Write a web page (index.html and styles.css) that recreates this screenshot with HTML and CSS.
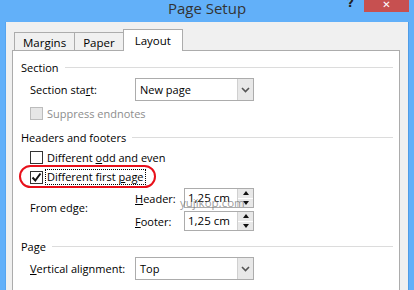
FILE: index.html
```html
<!DOCTYPE html>
<html lang="en">
<head>
  <meta charset="UTF-8">
  <title>Page Setup</title>
  <link rel="stylesheet" href="styles.css">
</head>
<body>
  <div class="window">
    <!-- Title bar -->
    <div class="titlebar">
      <div></div>
      <div class="title">Page Setup</div>
      <div class="controls">
        <span class="help">?</span>
        <span class="close">&#x2715;</span>
      </div>
    </div>

    <div class="frame">
      <!-- Tabs -->
      <div class="tabs">
        <div class="tab">Margins</div>
        <div class="tab">Paper</div>
        <div class="tab active">Layout</div>
      </div>

      <div class="panel">
        <div class="group-title"><span>Section</span></div>
        <div class="row">
          <label class="label">Section sta<u>r</u>t:</label>
          <div class="select">
            <span class="value">New page</span>
            <span class="arrow"><svg width="9" height="6" viewBox="0 0 9 6"><path d="M1 1l3.5 3.5L8 1" fill="none" stroke="#555" stroke-width="1.6"/></svg></span>
          </div>
        </div>
        <div class="check-row disabled">
          <span class="box"></span>
          <span>Suppress endnotes</span>
        </div>

        <div class="group-title mt"><span>Headers and footers</span></div>
        <div class="check-row first">
          <span class="box"></span>
          <span>Different <u>o</u>dd and even</span>
        </div>
        <div class="check-row second">
          <span class="box">
            <svg width="11" height="11" viewBox="0 0 11 11"><path d="M1.5 5.5l2.8 3L9.5 1.5" fill="none" stroke="#111" stroke-width="2"/></svg>
          </span>
          <span class="focus">Different first <u>p</u>age</span>
          <span class="ring"></span>
        </div>

        <div class="edge">
          <div class="edge-label">From edge:</div>
          <div class="edge-name"><u>H</u>eader:</div>
          <div class="spin">
            <span class="value">1,25 cm</span>
            <span class="spin-btns">
              <span class="up"></span>
              <span class="down"></span>
            </span>
          </div>
          <div class="edge-name"><u>F</u>ooter:</div>
          <div class="spin">
            <span class="value">1,25 cm</span>
            <span class="spin-btns">
              <span class="up"></span>
              <span class="down"></span>
            </span>
          </div>
          <span class="watermark">yujikop.com</span>
        </div>

        <div class="group-title page"><span>Page</span></div>
        <div class="row">
          <label class="label"><u>V</u>ertical alignment:</label>
          <div class="select">
            <span class="value">Top</span>
            <span class="arrow"><svg width="9" height="6" viewBox="0 0 9 6"><path d="M1 1l3.5 3.5L8 1" fill="none" stroke="#555" stroke-width="1.6"/></svg></span>
          </div>
        </div>
      </div>
    </div>
  </div>
</body>
</html>
```

FILE: styles.css
```css
/* General */
body {
  margin: 0;
  font-family: 'Open Sans', 'Noto Sans', sans-serif;
  font-size: 11px;
  color: #000;
  background: #62b0f9;
}

.window {
  width: 414px;
  height: 290px;
  overflow: hidden;
  background: #62b0f9;
}

/* Title bar */
.titlebar {
  height: 22px;
  display: grid;
  grid-template-columns: 1fr auto 1fr;
}

.title {
  font-size: 15px;
  line-height: 18px;
  color: #333;
  margin-top: -1px;
}

.controls {
  display: flex;
  justify-content: flex-end;
  align-items: flex-start;
  padding-right: 5px;
}

.help {
  font-family: 'DejaVu Sans', sans-serif;
  font-weight: bold;
  font-size: 12px;
  line-height: 14px;
  color: #222;
  margin: -4px 10px 0 0;
}

.close {
  width: 45px;
  height: 12px;
  background: #c75050;
  color: #fff;
  font-family: 'DejaVu Sans', sans-serif;
  font-weight: bold;
  font-size: 10px;
  line-height: 9px;
  text-align: center;
}

/* Dialog body */
.frame {
  margin: 0 5px 0 5px;
  height: 268px;
  background: #f0f0f0;
  border-left: 1px solid #56a5f0;
  border-right: 1px solid #4f9ce6;
  padding: 7px 8px 0 6px;
}

.tabs {
  display: flex;
  align-items: flex-end;
  padding-left: 2px;
  height: 21px;
}

.tab {
  height: 17px;
  line-height: 19px;
  border: 1px solid #acacac;
  border-bottom: none;
  background: #f0f0f0;
  font-size: 11.5px;
  padding: 0 8px;
  margin-left: -1px;
}

.tab:first-child {
  margin-left: 0;
}

.tab.active {
  height: 21px;
  line-height: 22px;
  background: #fff;
  padding: 0 11px;
  position: relative;
  margin-bottom: -1px;
  z-index: 1;
}

.panel {
  border: 1px solid #acacac;
  background: #fff;
  height: 260px;
  padding: 0 6px 0 8px;
}

/* Group headings with rule */
.group-title {
  display: flex;
  align-items: center;
  height: 14px;
  margin-top: 9px;
}

.group-title::after {
  content: '';
  flex: 1;
  height: 1px;
  background: #dcdcdc;
  margin-left: 6px;
}

.group-title.mt {
  margin-top: 10px;
}

.group-title.page {
  margin-top: 8px;
}

/* Label + control rows */
.row {
  display: flex;
  align-items: center;
  margin-top: 4px;
  padding-left: 9px;
}

.label {
  width: 105px;
}

.select {
  width: 117px;
  height: 21px;
  border: 1px solid #acacac;
  display: flex;
  align-items: stretch;
}

.select .value {
  flex: 1;
  padding-left: 4px;
  line-height: 21px;
}

.select .arrow {
  width: 15px;
  border-left: 1px solid #d0d0d0;
  background: #e8e8e8;
  display: flex;
  align-items: center;
  justify-content: center;
}

/* Checkboxes */
.check-row {
  display: flex;
  align-items: center;
  height: 14px;
  margin-top: 5px;
  padding-left: 9px;
  position: relative;
}

.check-row.first {
  margin-top: 6px;
}

.check-row.second {
  margin-top: 6px;
}

.box {
  width: 11px;
  height: 11px;
  border: 1px solid #333;
  background: #fff;
  margin-right: 4px;
  display: flex;
  align-items: center;
  justify-content: center;
}

.disabled {
  color: #8d8d8d;
}

.disabled .box {
  border-color: #bcbcbc;
  background: #e6e6e6;
}

.focus {
  outline: 1px dotted #000;
  padding: 0 1px;
  margin-left: -1px;
  line-height: 14px;
}

.ring {
  position: absolute;
  left: -2px;
  top: -5px;
  width: 133px;
  height: 19px;
  border: 2px solid #e8101a;
  border-radius: 12px;
}

/* From edge block */
.edge {
  display: grid;
  grid-template-columns: 105px 49px auto;
  grid-template-rows: 20px 20px;
  row-gap: 3px;
  margin-top: 4px;
  padding-left: 9px;
  align-items: center;
  position: relative;
}

.edge-label {
  grid-row: 1 / 3;
  padding-bottom: 5px;
}

.spin {
  width: 68px;
  height: 18px;
  border: 1px solid #acacac;
  display: flex;
}

.spin .value {
  flex: 1;
  padding-left: 3px;
  line-height: 18px;
  font-size: 11.5px;
}

.spin-btns {
  width: 15px;
  border-left: 1px solid #d0d0d0;
  display: flex;
  flex-direction: column;
}

.spin-btns span {
  flex: 1;
  background: #e8e8e8;
  display: flex;
  align-items: center;
  justify-content: center;
}

.spin-btns .up {
  border-bottom: 1px solid #fff;
}

.spin-btns .up::after {
  content: '';
  border: 3px solid transparent;
  border-bottom: 4px solid #111;
  border-top: none;
}

.spin-btns .down::after {
  content: '';
  border: 3px solid transparent;
  border-top: 4px solid #111;
  border-bottom: none;
}

.watermark {
  position: absolute;
  left: 159px;
  top: 7px;
  font-size: 11.5px;
  color: rgba(110, 110, 110, 0.7);
}
```
